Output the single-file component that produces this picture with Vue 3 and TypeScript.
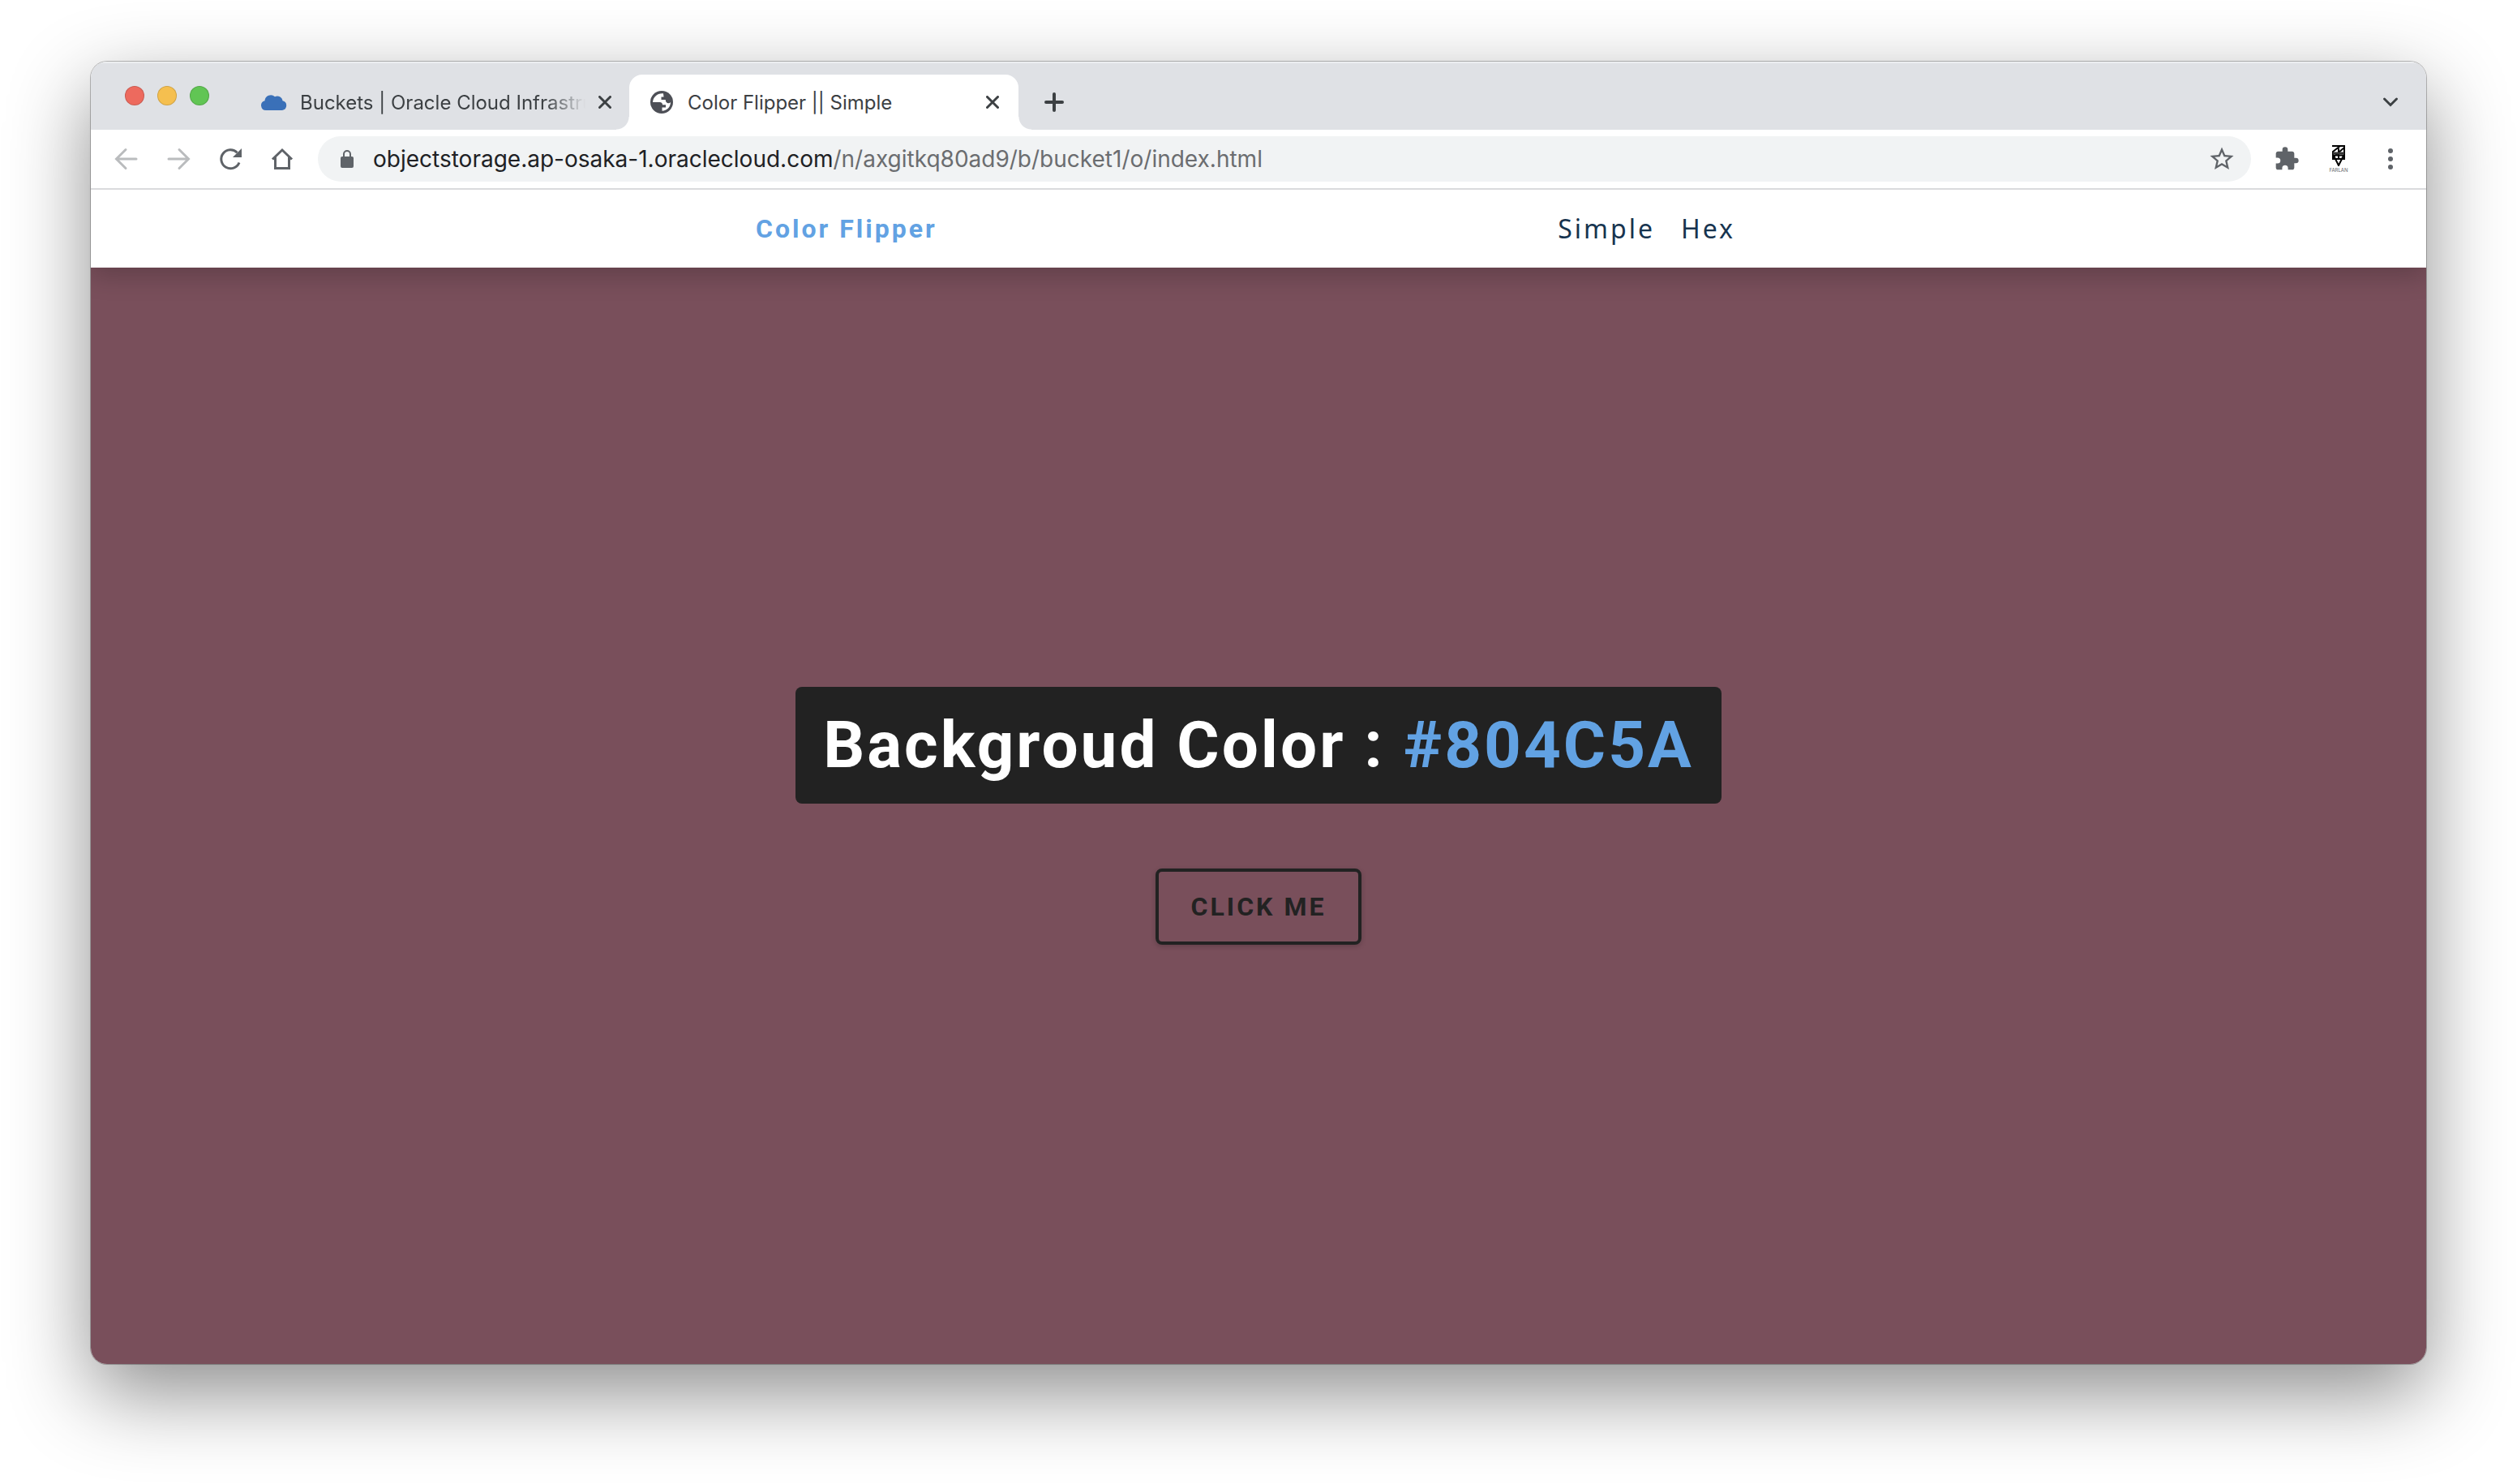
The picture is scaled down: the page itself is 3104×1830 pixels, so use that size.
<script setup lang="ts">
import { ref } from 'vue'

const color = ref('#804C5A')
const url = { host: 'objectstorage.ap-osaka-1.oraclecloud.com', path: '/n/axgitkq80ad9/b/bucket1/o/index.html' }
const links = ['Simple', 'Hex']

function flip(): void {
  const value = Math.floor(Math.random() * 0xffffff)
  color.value = '#' + value.toString(16).toUpperCase().padStart(6, '0')
}
</script>

<template>
  <div class="desktop">
    <div class="window">
      <header class="tabstrip">
        <div class="lights">
          <button class="light red" aria-label="Close window"></button>
          <button class="light yellow" aria-label="Minimise window"></button>
          <button class="light green" aria-label="Zoom window"></button>
        </div>
        <div class="tab">
          <svg class="icon" viewBox="0 0 32 32" aria-hidden="true">
            <path fill="#3a70b8" d="M6 26a6 6 0 0 1-1.500-11.800A7.500 7.500 0 0 1 17 9.200A6.500 6.500 0 0 1 26.500 14.200A6 6 0 0 1 26 26z" />
          </svg>
          <span class="title fade">Buckets | Oracle Cloud Infrastru</span>
          <button class="close" aria-label="Close tab">
            <svg viewBox="0 0 16 16"><path d="M1.500 1.500l13 13M14.500 1.500l-13 13" /></svg>
          </button>
        </div>
        <div class="tab active">
          <svg class="icon" viewBox="0 0 32 32" aria-hidden="true">
            <circle cx="16" cy="16" r="14" fill="#4d4f56" />
            <path fill="#fff" d="M18 5.200C11 4.500 5.200 9.500 5 16h8.500c2.500 0 3.500 1.500 3.500 3.200h4v3.400h-4.500v4.200C22.500 26.600 27 21.800 27 16c-1.500 2-4 1.500-5 .3-1.200-1.300-1-2.300-1.300-3.300h-5.200V9.500h3z" />
          </svg>
          <span class="title">Color Flipper || Simple</span>
          <button class="close" aria-label="Close tab">
            <svg viewBox="0 0 16 16"><path d="M1.500 1.500l13 13M14.500 1.500l-13 13" /></svg>
          </button>
        </div>
        <button class="newtab" aria-label="New tab">
          <svg viewBox="0 0 24 24"><path d="M12 2v20M2 12h20" /></svg>
        </button>
        <button class="chevron" aria-label="Search tabs">
          <svg viewBox="0 0 20 14"><path d="M2.500 3l7.500 7.500L17.500 3" /></svg>
        </button>
      </header>

      <div class="toolbar">
        <button class="tool muted" aria-label="Back">
          <svg viewBox="0 0 32 32"><path class="line" d="M28 16H4M15 4.500L3.500 16 15 27.500" /></svg>
        </button>
        <button class="tool muted" aria-label="Forward">
          <svg viewBox="0 0 32 32"><path class="line" d="M4 16h24M17 4.500L28.500 16 17 27.500" /></svg>
        </button>
        <button class="tool" aria-label="Reload">
          <svg viewBox="0 0 32 32">
            <path class="line thick" d="M27 20.500A11.500 11.500 0 1 1 24.500 8.200" />
            <path d="M30 3v11H19z" />
          </svg>
        </button>
        <button class="tool" aria-label="Home">
          <svg viewBox="0 0 32 32"><path class="line thick" d="M4 16.500L16 5l12 11.500M7.500 14v13.500h17V14" /></svg>
        </button>
        <div class="omnibox">
          <svg class="lock" viewBox="0 0 16 22" aria-hidden="true">
            <rect y="8" width="16" height="14" rx="2" />
            <path class="shackle" d="M4 9V5a4 4 0 0 1 8 0v4" />
          </svg>
          <span class="url">{{ url.host }}<span class="path">{{ url.path }}</span></span>
          <button class="star" aria-label="Bookmark this page">
            <svg viewBox="1 1 22 22"><path d="M22 9.240l-7.190-.62L12 2 9.190 8.630 2 9.240l5.460 4.730L5.820 21 12 17.270 18.180 21l-1.630-7.030L22 9.240zM12 15.400l-3.760 2.270 1-4.280-3.320-2.880 4.380-.38L12 6.100l1.710 4.040 4.380.38-3.320 2.880 1 4.280L12 15.400z" /></svg>
          </button>
        </div>
        <button class="tool" aria-label="Extensions">
          <svg viewBox="0 0 24 24"><path d="M20.500 11H19V7c0-1.100-.9-2-2-2h-4V3.500a2.500 2.500 0 0 0-5 0V5H4c-1.100 0-2 .9-2 2v3.800h1.500a2.700 2.700 0 0 1 0 5.400H2V20c0 1.100.9 2 2 2h3.800v-1.500a2.700 2.700 0 0 1 5.400 0V22H17c1.100 0 2-.9 2-2v-4h1.500a2.500 2.500 0 0 0 0-5z" /></svg>
        </button>
        <button class="tool profile" aria-label="Profile">
          <svg viewBox="0 0 16 26">
            <path d="M0 1h15v16H1V8L10 1M1 15L15 3M8 4v13M1 12.500h14M1.500 12L8 25l6.500-13" />
            <path class="band" d="M1 10h14" />
          </svg>
          <span>FARLAN</span>
        </button>
        <button class="tool" aria-label="Menu">
          <svg viewBox="0 0 32 32"><circle cx="16" cy="6" r="3" /><circle cx="16" cy="16" r="3" /><circle cx="16" cy="26" r="3" /></svg>
        </button>
      </div>

      <nav class="nav">
        <div class="nav-center">
          <h4 class="brand">Color Flipper</h4>
          <ul class="links">
            <li v-for="link in links" :key="link"><a href="#">{{ link }}</a></li>
          </ul>
        </div>
      </nav>

      <main class="page">
        <h2 class="label">Backgroud Color : <span class="value">{{ color }}</span></h2>
        <button class="btn" @click="flip">click me</button>
      </main>
    </div>
  </div>
</template>

<style>
body {
  margin: 0;
  background: #fff;
}
</style>

<style scoped>
* {
  box-sizing: border-box;
}

button {
  padding: 0;
  border: 0;
  background: none;
  color: inherit;
}

svg {
  display: block;
}

.desktop {
  min-height: 100vh;
  display: flex;
  padding: 76px 112px 148px;
  font-family: Inter, "Liberation Sans", sans-serif;
  overflow: hidden;
}

.window {
  flex: 1;
  display: flex;
  flex-direction: column;
  overflow: hidden;
  border-radius: 20px;
  background: #fff;
  box-shadow: 0 0 0 1px rgba(0, 0, 0, 0.25), 0 36px 100px rgba(0, 0, 0, 0.45);
}

.tabstrip {
  height: 84px;
  display: flex;
  align-items: flex-end;
  background: #dfe1e5;
  color: #3c4043;
  box-shadow: inset 0 2px 0 #eceef0;
}

.lights {
  align-self: center;
  display: flex;
  gap: 16px;
  width: 186px;
  padding: 0 0 0 42px;
}

.light {
  width: 24px;
  height: 24px;
  border-radius: 50%;
  border: 1px solid rgba(0, 0, 0, 0.15);
}

.red { background: #ed6a5e; }
.yellow { background: #f5bf4f; }
.green { background: #61c554; }

.tab {
  width: 478px;
  height: 68px;
  display: flex;
  align-items: center;
  gap: 16px;
  padding: 0 22px 0 24px;
  font-size: 24px;
  position: relative;
}

.tab.active {
  width: 480px;
  padding-right: 24px;
  background: #fff;
  border-radius: 16px 16px 0 0;
}

.tab.active::before,
.tab.active::after {
  content: "";
  position: absolute;
  bottom: 0;
  width: 16px;
  height: 16px;
}

.tab.active::before {
  right: 100%;
  background: radial-gradient(circle at 0 0, transparent 15px, #fff 16px);
}

.tab.active::after {
  left: 100%;
  background: radial-gradient(circle at 100% 0, transparent 15px, #fff 16px);
}

.icon {
  width: 32px;
  height: 32px;
  flex: none;
}

.title {
  flex: 1;
  overflow: hidden;
  white-space: nowrap;
}

.fade {
  mask-image: linear-gradient(to right, #000 86%, transparent);
}

.close svg {
  width: 16px;
  height: 16px;
}

.close svg,
.newtab svg,
.chevron svg {
  fill: none;
  stroke: #3c4043;
  stroke-width: 3;
  stroke-linecap: round;
}

.newtab {
  height: 68px;
  margin-left: 32px;
}

.newtab svg {
  width: 24px;
  height: 24px;
  stroke-width: 4;
}

.chevron {
  height: 68px;
  margin: 0 34px 0 auto;
}

.chevron svg {
  width: 20px;
  height: 14px;
}

.toolbar {
  height: 74px;
  display: flex;
  align-items: center;
  gap: 32px;
  padding: 0 28px;
  border-bottom: 2px solid #dadbdd;
  background: #fff;
  color: #5f6368;
  position: relative;
  z-index: 1;
}

.tool svg {
  width: 32px;
  height: 32px;
  fill: currentColor;
}

.muted {
  color: #babcbe;
}

.line {
  fill: none;
  stroke: currentColor;
  stroke-width: 3;
  stroke-linecap: round;
}

.line.thick {
  stroke-linecap: butt;
}

.omnibox {
  flex: 1;
  height: 56px;
  display: flex;
  align-items: center;
  gap: 24px;
  margin: 0 -4px;
  padding: 0 20px 0 28px;
  border-radius: 28px;
  background: #f1f3f4;
}

.lock {
  width: 16px;
  height: 22px;
  fill: currentColor;
}

.shackle {
  fill: none;
  stroke: currentColor;
  stroke-width: 2;
}

.url {
  flex: 1;
  font-size: 28px;
  white-space: nowrap;
  color: #202124;
}

.path {
  color: #6b6d70;
}

.star svg {
  width: 32px;
  height: 32px;
  fill: currentColor;
}

.profile {
  width: 32px;
  display: flex;
  flex-direction: column;
  align-items: center;
  gap: 2px;
  font: 6px/6px Inter, sans-serif;
}

.profile svg {
  width: 16px;
  height: 26px;
  fill: none;
  stroke: #000;
  stroke-width: 2;
}

.profile .band {
  stroke: #333;
  stroke-width: 3;
}

.nav {
  height: 96px;
  display: flex;
  justify-content: center;
  background: #fff;
  box-shadow: 0 10px 30px rgba(0, 0, 0, 0.2);
  position: relative;
}

.nav-center {
  width: 90%;
  max-width: 1240px;
  display: flex;
  align-items: center;
  justify-content: space-between;
}

.brand {
  margin: 0;
  font: 700 32px/40px Roboto, sans-serif;
  letter-spacing: 3px;
  color: #62a2e3;
}

.links {
  display: flex;
  margin: 0;
  padding: 0;
  list-style: none;
}

.links a {
  padding-right: 32px;
  font: 32px/48px "Noto Sans", "Open Sans", sans-serif;
  letter-spacing: 3px;
  color: #17344f;
  text-decoration: none;
}

.page {
  flex: 1;
  display: flex;
  flex-direction: column;
  align-items: center;
  justify-content: center;
  gap: 80px;
  background: #794f5b;
}

.label {
  margin: 0;
  padding: 32px 34px;
  border-radius: 8px;
  background: #222;
  color: #fff;
  font: 700 80px/80px Roboto, sans-serif;
  letter-spacing: 3px;
}

.value {
  color: #62a2e3;
}

.btn {
  padding: 24px 40px;
  border: 4px solid #222;
  border-radius: 8px;
  box-shadow: 0 2px 6px rgba(0, 0, 0, 0.2);
  font: 700 32px/38px Roboto, sans-serif;
  letter-spacing: 3px;
  text-transform: uppercase;
  color: #222;
}
</style>
